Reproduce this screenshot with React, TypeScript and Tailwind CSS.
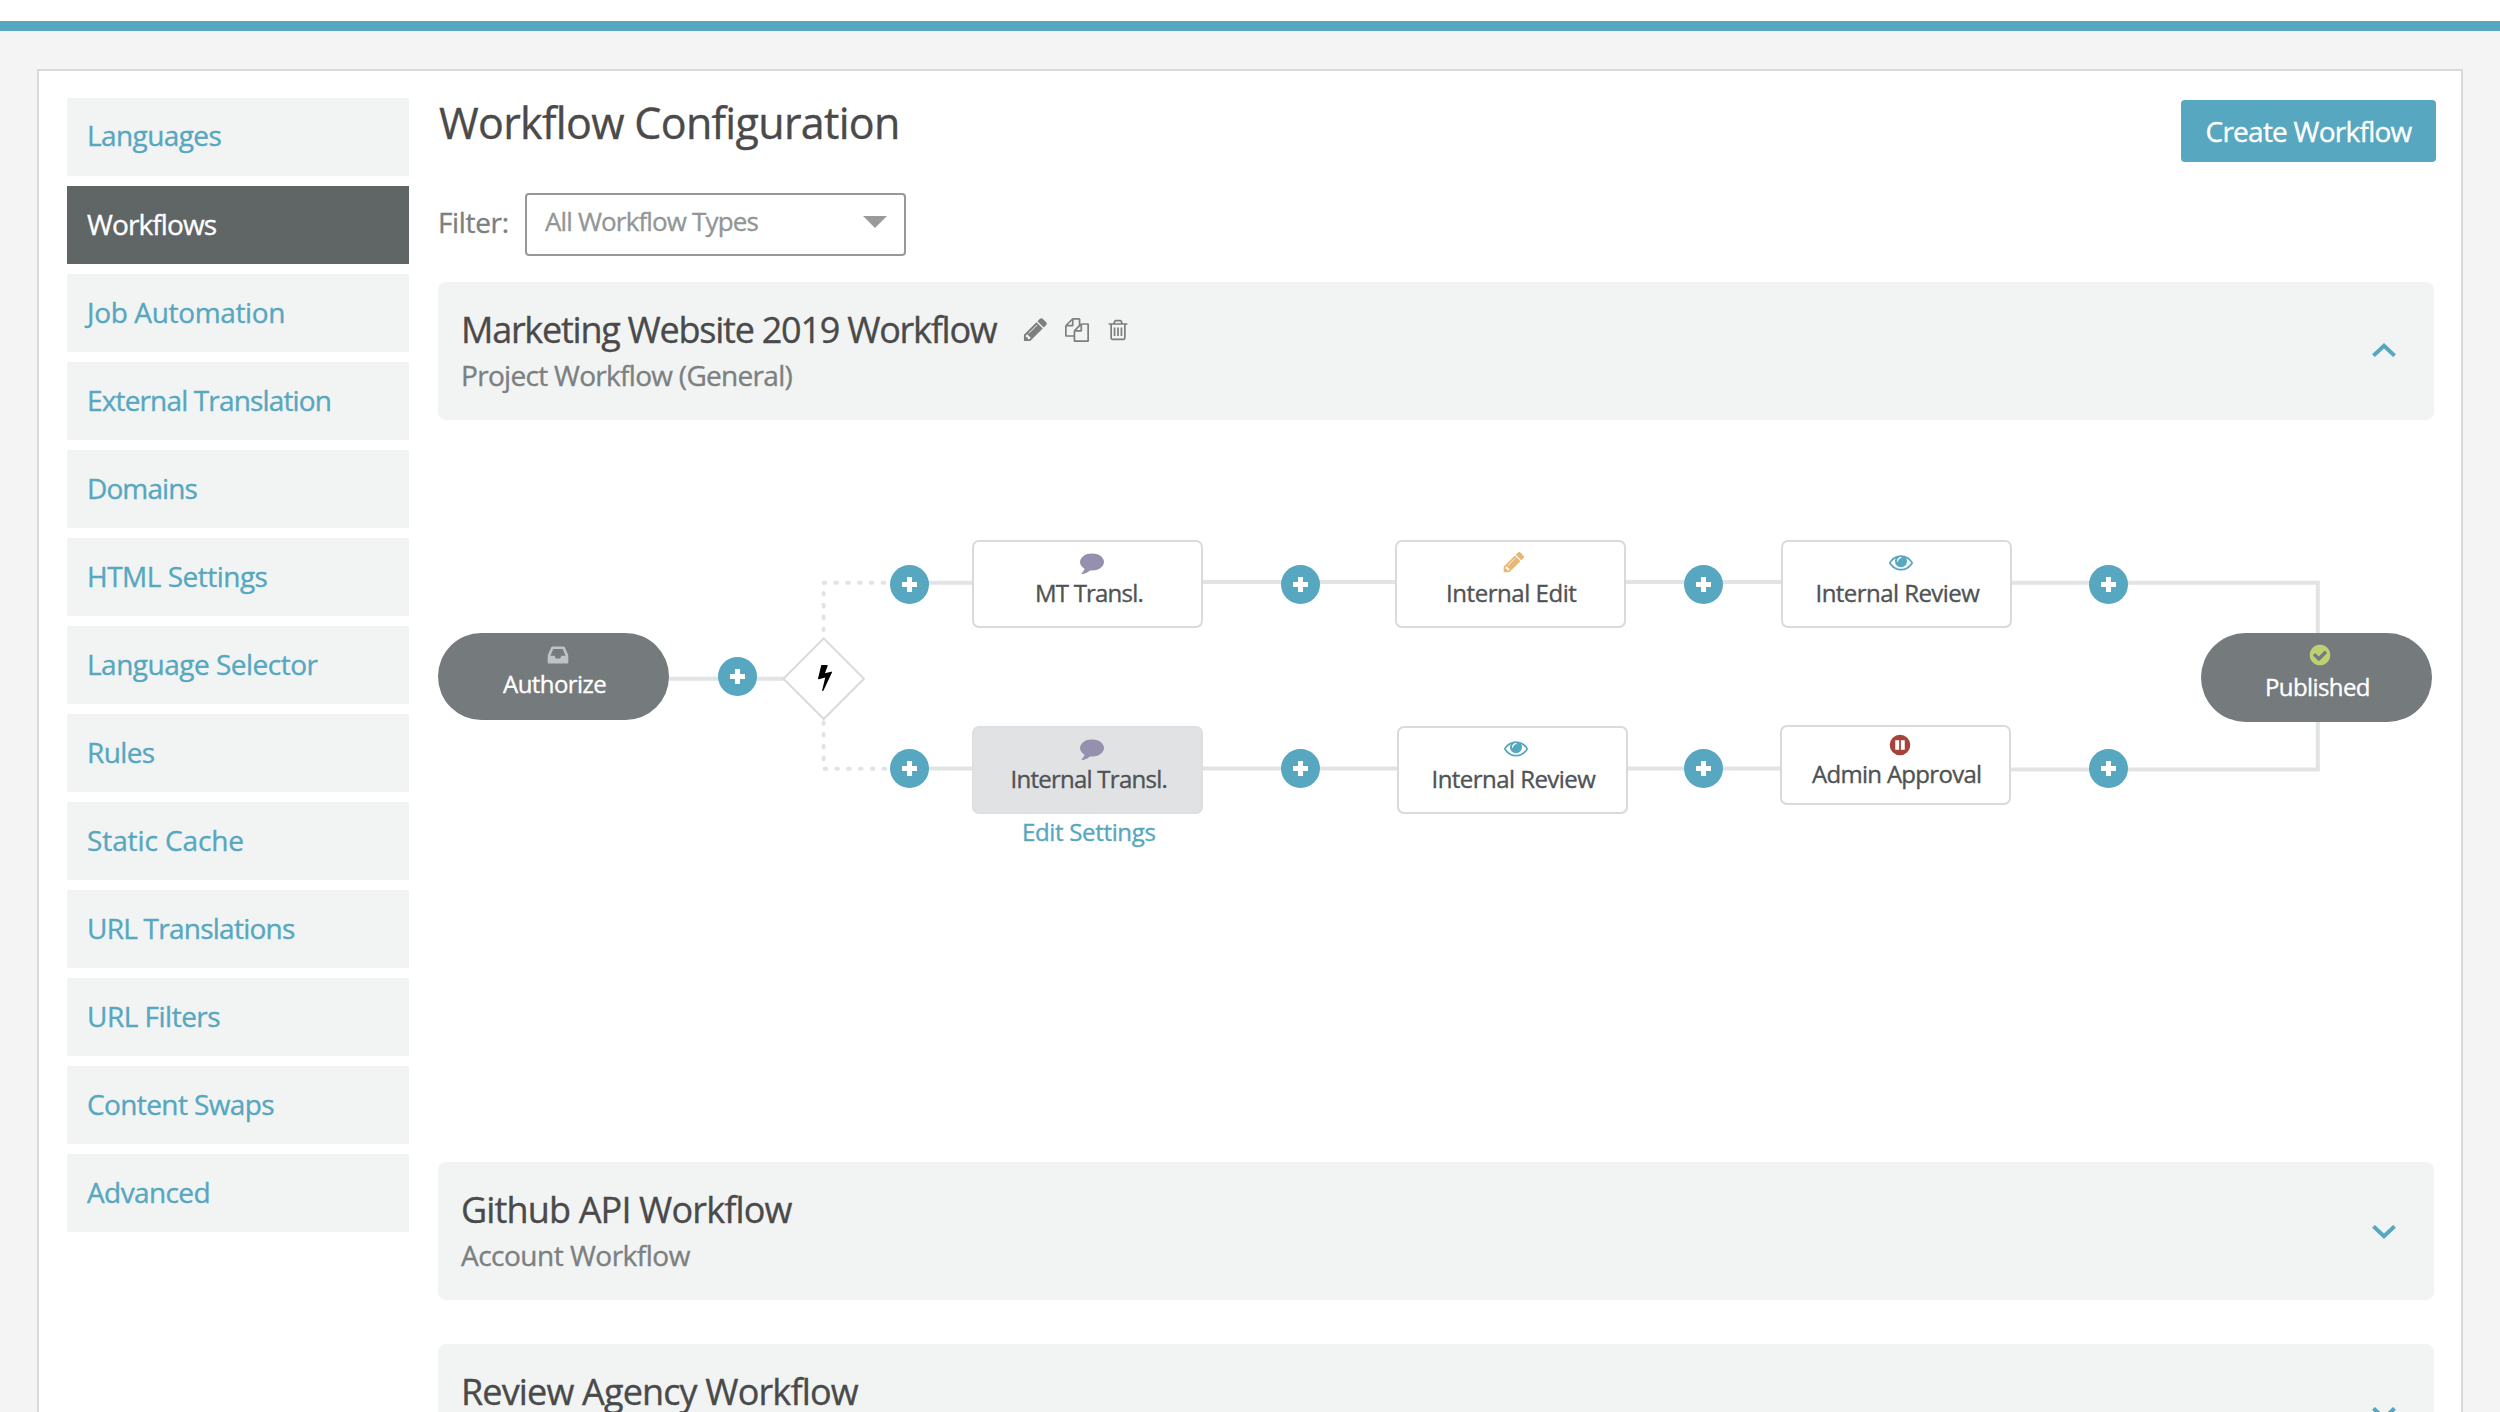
import React from "react";

const P = {
  pencil:
    "M491 1536l91-91-235-235-91 91v107h128v128h107zm523-928q0-22-22-22-10 0-17 7l-542 542q-7 7-7 17 0 22 22 22 10 0 17-7l542-542q7-7 7-17zm-54-192l416 416-832 832h-416v-416zm683 96q0 53-37 90l-166 166-416-416 166-165q36-38 90-38 53 0 91 38l235 234q37 39 37 91z",
  copy: "M1696 384q40 0 68 28t28 68v1216q0 40-28 68t-68 28h-960q-40 0-68-28t-28-68v-288h-544q-40 0-68-28t-28-68v-672q0-40 20-88t48-76l408-408q28-28 76-48t88-20h416q40 0 68 28t28 68v328q68-40 128-40h416zm-544 213l-299 299h299v-299zm-640-384l-299 299h299v-299zm196 647l316-316v-416h-384v416q0 40-28 68t-68 28h-416v640h512v-256q0-40 20-88t48-76zm956 804v-1152h-384v416q0 40-28 68t-68 28h-416v640h896z",
  trash:
    "M704 736v576q0 14-9 23t-23 9h-64q-14 0-23-9t-9-23v-576q0-14 9-23t23-9h64q14 0 23 9t9 23zm256 0v576q0 14-9 23t-23 9h-64q-14 0-23-9t-9-23v-576q0-14 9-23t23-9h64q14 0 23 9t9 23zm256 0v576q0 14-9 23t-23 9h-64q-14 0-23-9t-9-23v-576q0-14 9-23t23-9h64q14 0 23 9t9 23zm128 724v-948h-896v948q0 22 7 40.5t14.5 27 10.5 8.5h832q3 0 10.5-8.5t14.5-27 7-40.5zm-672-1076h448l-48-117q-7-9-17-11h-317q-10 2-17 11zm928 32v64q0 14-9 23t-23 9h-96v948q0 83-47 143.5t-113 60.5h-832q-66 0-113-58.5t-47-141.5v-952h-96q-14 0-23-9t-9-23v-64q0-14 9-23t23-9h309l70-167q15-37 54-63t79-26h320q40 0 79 26t54 63l70 167h309q14 0 23 9t9 23z",
  comment:
    "M1792 896q0 174-120 321.5t-326 233-450 85.5q-70 0-145-8-198 175-460 242-49 14-114 22-17 2-30.5-9t-17.5-29v-1q-3-4-.5-12t2-10 4.5-9.5l6-9 7-8.5 8-9q7-8 31-34.5t34.5-38 31-39.5 32.5-51 27-59 26-76q-157-89-247.5-220t-90.5-281q0-130 71-248.5t191-204.5 286-136.5 348-50.5q244 0 450 85.5t326 233 120 321.5z",
  eye: "M1664 960q-152-236-381-353 61 104 61 225 0 185-131.5 316.5t-316.5 131.5-316.5-131.5-131.5-316.5q0-121 61-225-229 117-381 353 133 205 333.5 326.5t434.5 121.5 434.5-121.5 333.5-326.5zm-720-384q0-20-14-34t-34-14q-125 0-214.5 89.5t-89.5 214.5q0 20 14 34t34 14 34-14 14-34q0-86 61-147t147-61q20 0 34-14t14-34zm848 384q0 34-20 69-140 230-376.5 368.5t-499.5 138.5-499.5-139-376.5-368q-20-35-20-69t20-69q140-229 376.5-368t499.5-139 499.5 139 376.5 368q20 35 20 69z",
  bolt: "M1333 566q18 20 7 44l-540 1157q-13 25-42 25-4 0-14-2-17-5-25.5-19t-4.5-30l197-808-406 101q-4 1-12 1-18 0-31-11-18-15-13-39l201-825q4-14 16-23t28-9h328q19 0 32 12.5t13 29.5q0 8-5 18l-171 463 396-98q8-2 12-2 19 0 34 15z",
  check:
    "M1412 734q0-28-18-46l-91-90q-19-19-45-19t-45 19l-408 407-226-226q-19-19-45-19t-45 19l-91 90q-18 18-18 46 0 27 18 45l362 362q19 19 45 19 27 0 46-19l543-543q18-18 18-45zm252 162q0 209-103 385.5t-279.5 279.5-385.5 103-385.5-103-279.5-279.5-103-385.5 103-385.5 279.5-279.5 385.5-103 385.5 103 279.5 279.5 103 385.5z",
  inbox:
    "M1151 960h316q-1-3-2.5-8t-2.5-8l-212-496h-708l-212 496q-1 2-2.5 8t-2.5 8h316l95 192h320zm513 30v482q0 26-19 45t-45 19h-1408q-26 0-45-19t-19-45v-482q0-62 25-123l238-552q10-25 36.5-42t52.5-17h832q26 0 52.5 17t36.5 42l238 552q25 61 25 123z",
  pause:
    "M896 128a768 768 0 1 0 0 1536a768 768 0 1 0 0-1536zM540 540h290v712h-290zM962 540h290v712h-290z",
};

function Icon({ name, className }: { name: keyof typeof P; className: string }) {
  return (
    <svg viewBox="0 0 1792 1792" fill="currentColor" fillRule={name === "pause" ? "evenodd" : "nonzero"} className={`shrink-0 overflow-visible ${className}`}>
      <path d={P[name]} />
    </svg>
  );
}

const NAV = [
  { label: "Languages", cls: "tracking-[-0.6px] bg-[#f2f4f4] text-[#56a7bf] pb-[5px]" },
  { label: "Workflows", cls: "tracking-[-0.9px] bg-[#606666] text-white pb-[2px]" },
  { label: "Job Automation", cls: "tracking-[-0.35px] bg-[#f2f4f4] text-[#56a7bf] pb-[2px]" },
  { label: "External Translation", cls: "tracking-[-0.85px] bg-[#f2f4f4] text-[#56a7bf] pb-[2px]" },
  { label: "Domains", cls: "tracking-[-0.9px] bg-[#f2f4f4] text-[#56a7bf] pb-[2px]" },
  { label: "HTML Settings", cls: "tracking-[-0.5px] bg-[#f2f4f4] text-[#56a7bf] pb-[2px]" },
  { label: "Language Selector", cls: "tracking-[-0.5px] bg-[#f2f4f4] text-[#56a7bf] pb-[2px]" },
  { label: "Rules", cls: "tracking-[-0.6px] bg-[#f2f4f4] text-[#56a7bf] pb-[2px]" },
  { label: "Static Cache", cls: "tracking-[-0.1px] bg-[#f2f4f4] text-[#56a7bf] pb-[2px]" },
  { label: "URL Translations", cls: "tracking-[-0.75px] bg-[#f2f4f4] text-[#56a7bf] pb-[2px]" },
  { label: "URL Filters", cls: "tracking-[-0.5px] bg-[#f2f4f4] text-[#56a7bf] pb-[2px]" },
  { label: "Content Swaps", cls: "tracking-[-0.6px] bg-[#f2f4f4] text-[#56a7bf] pb-[2px]" },
  { label: "Advanced", cls: "tracking-[-0.6px] bg-[#f2f4f4] text-[#56a7bf] pb-[2px]" },
];

function Chevron({ up = false }: { up?: boolean }) {
  return (
    <svg viewBox="0 0 24 14" className={up ? "mt-[61px] h-[14px] w-6" : "mt-[63px] h-[14px] w-6"} fill="none" stroke="#56a7bf" strokeWidth="4">
      <path d={up ? "M1.5 12.6L12 2.8L22.5 12.6" : "M1.5 1.4L12 11.2L22.5 1.4"} />
    </svg>
  );
}

function Card(props: { title: string; sub?: string; titleCls: string; subCls?: string; up?: boolean; children?: React.ReactNode }) {
  return (
    <section className="flex h-[138px] w-[1996px] shrink-0 justify-between rounded-lg bg-[#f2f4f4] pr-[38px] pl-[23px]">
      <div className="pt-[30px]">
        <div className="flex h-9 items-center">
          <h2 className={`text-[36px] leading-9 text-[#4a4a4a] ${props.titleCls}`}>{props.title}</h2>
          {props.children}
        </div>
        {props.sub && <p className={`mt-[13px] text-[28px] leading-7 text-[#7b8081] ${props.subCls ?? ""}`}>{props.sub}</p>}
      </div>
      <Chevron up={props.up} />
    </section>
  );
}

/* Node positions are relative to the canvas origin. */
const NODES: { label: string; icon: keyof typeof P; box: string; iconCls: string; text: string }[] = [
  { label: "Authorize", icon: "inbox", box: "left-0 top-[213px] h-[87px] w-[231px] rounded-full bg-[#757a7c] text-white", iconCls: "left-[108px] top-[10px] text-[#bfc3c4]", text: "left-[65px] top-[39px] tracking-[-0.55px]" },
  { label: "MT Transl.", icon: "comment", box: "left-[534px] top-[120px] h-[88px] w-[231px] rounded-[7px] border-2 border-[#d9dadb] bg-white text-[#4f5354]", iconCls: "left-[105.5px] top-[8px] text-[#9590ae]", text: "left-[61px] top-[39px] tracking-[-0.8px]" },
  { label: "Internal Edit", icon: "pencil", box: "left-[957px] top-[120px] h-[88px] w-[231px] rounded-[7px] border-2 border-[#d9dadb] bg-white text-[#4f5354]", iconCls: "left-[105px] top-[8px] text-[#e6b873]", text: "left-[49px] top-[39px] tracking-[-0.45px]" },
  { label: "Internal Review", icon: "eye", box: "left-[1343px] top-[120px] h-[88px] w-[231px] rounded-[7px] border-2 border-[#d9dadb] bg-white text-[#4f5354]", iconCls: "left-[105.5px] top-[8px] text-[#56a7bf]", text: "left-[32.5px] top-[39px] tracking-[-0.55px]" },
  { label: "Internal Transl.", icon: "comment", box: "left-[534px] top-[306px] h-[88px] w-[231px] rounded-[7px] border-2 border-[#dedfe1] bg-[#e1e2e4] text-[#4f5354]", iconCls: "left-[105.5px] top-[8px] text-[#9590ae]", text: "left-[36.5px] top-[39px] tracking-[-0.75px]" },
  { label: "Internal Review", icon: "eye", box: "left-[959px] top-[306px] h-[88px] w-[231px] rounded-[7px] border-2 border-[#d9dadb] bg-white text-[#4f5354]", iconCls: "left-[105px] top-[8px] text-[#56a7bf]", text: "left-[32.5px] top-[39px] tracking-[-0.55px]" },
  { label: "Admin Approval", icon: "pause", box: "left-[1342px] top-[305px] h-[80px] w-[231px] rounded-[7px] border-2 border-[#d9dadb] bg-white text-[#4f5354]", iconCls: "left-[106px] top-[6px] text-[#a5443b]", text: "left-[30px] top-[35px] tracking-[-0.7px]" },
  { label: "Published", icon: "check", box: "left-[1763px] top-[213px] h-[89px] w-[231px] rounded-full bg-[#757a7c] text-white", iconCls: "left-[107px] top-[10px] text-[#bed073]", text: "left-[64px] top-[42px] tracking-[-0.6px]" },
];

const PLUSES = [
  "left-[280px] top-[237px]",
  "left-[452px] top-[145px]",
  "left-[452px] top-[329px]",
  "left-[843px] top-[145px]",
  "left-[843px] top-[329px]",
  "left-[1246px] top-[145px]",
  "left-[1246px] top-[329px]",
  "left-[1651px] top-[145px]",
  "left-[1651px] top-[329px]",
];

function Canvas() {
  return (
    <div className="relative h-[742px] w-[1996px] shrink-0">
      <svg className="absolute inset-0 h-full w-full" viewBox="438 420 1996 742" fill="none" stroke="#e1e3e4" strokeWidth="4">
        <path d="M668 678.7H784M909 582.8H974M909 768.5H974M1202 582H1396M1202 768.5H1398M1624 582H1783M1626 768.5H1781" />
        <path d="M2010 582.8H2317.8V640M2009 769.4H2317.8V715" />
        <g strokeLinecap="round" strokeDasharray="1.6 10.2">
          <path d="M823.6 593V636M823.6 722.2V762" />
          <path d="M823.6 582.7H890M824.6 768.7H890" />
        </g>
        <path d="M823.7 638.4L864 678.7L823.7 719L783.4 678.7Z" fill="#fff" stroke="#d9dadb" strokeWidth="2" />
      </svg>
      <Icon name="bolt" className="absolute top-[243px] left-[372.5px] h-7 w-7 text-black" />
      {NODES.map((n, i) => (
        <div key={i} className={`absolute ${n.box}`}>
          <Icon name={n.icon} className={`absolute h-6 w-6 ${n.iconCls}`} />
          <span className={`absolute text-[24px] leading-6 whitespace-nowrap ${n.text}`}>{n.label}</span>
        </div>
      ))}
      {PLUSES.map((c) => (
        <button key={c} className={`absolute flex h-[39px] w-[39px] items-center justify-center rounded-full bg-[#56a7bf] ${c}`}>
          <svg viewBox="0 0 16 16" className="h-[15px] w-[15px]" fill="#fff">
            <path d="M5.3 0h5.4v5.3H16v5.4h-5.3V16H5.3v-5.3H0V5.3h5.3z" />
          </svg>
        </button>
      ))}
      <a className="absolute top-[400px] left-[584px] text-[24px] leading-6 tracking-[-0.33px] whitespace-nowrap text-[#56a7bf]">Edit Settings</a>
    </div>
  );
}

export default function App() {
  return (
    <div className="flex h-[1412px] w-[2500px] flex-col overflow-hidden bg-[#f4f4f4] font-['Open_Sans',sans-serif] [-webkit-text-stroke:0.35px_currentColor]">
      <div className="h-[31px] shrink-0 border-b-[10px] border-[#56a7bf] bg-white" />
      <div className="mt-[38px] ml-[37px] flex w-[2426px] grow gap-[29px] overflow-hidden border-2 border-b-0 border-[#d8d9d9] bg-white pt-[27px] pl-7">
        <nav className="flex w-[342px] shrink-0 flex-col gap-[10px]">
          {NAV.map((n) => (
            <a key={n.label} className={`flex h-[78px] shrink-0 items-center pl-5 text-[28px] leading-7 whitespace-nowrap ${n.cls}`}>
              {n.label}
            </a>
          ))}
        </nav>
        <main className="flex w-[1998px] flex-col">
          <header className="flex h-[95px] shrink-0 items-start justify-between pt-[2px]">
            <h1 className="mt-[1px] ml-[1px] text-[43px] leading-[43px] tracking-[-0.68px] text-[#4a4a4a]">Workflow Configuration</h1>
            <button className="flex h-[62px] w-[255px] items-center justify-center rounded bg-[#56a7bf] pb-[1px] text-[28px] leading-7 tracking-[-0.75px] text-white">
              Create Workflow
            </button>
          </header>
          <div className="mb-[26px] flex h-[63px] shrink-0">
            <label className="w-[87px] pt-[15px] text-[28px] leading-7 tracking-[-0.35px] text-[#7b8081]">Filter:</label>
            <div className="flex h-[63px] w-[381px] items-center justify-between rounded border-2 border-[#969999] pr-[17px] pb-[7px] pl-[18px] text-[26px] leading-7 tracking-[-0.85px] text-[#929696]">
              <span>All Workflow Types</span>
              <svg viewBox="0 0 24 12" className="mt-[2px] h-3 w-6" fill="#999b9b">
                <path d="M0 0h24L12 12z" />
              </svg>
            </div>
          </div>
          <Card up title="Marketing Website 2019 Workflow" sub="Project Workflow (General)" titleCls="tracking-[-1.25px]" subCls="tracking-[-0.7px]">
            <div className="ml-[26px] flex items-center text-[#7c7f7f]">
              <Icon name="pencil" className="mr-[16px] -mt-[1px] h-[27px] w-[27px]" />
              <Icon name="copy" className="mr-[17px] h-6 w-6" />
              <Icon name="trash" className="h-6 w-6" />
            </div>
          </Card>
          <Canvas />
          <div className="flex flex-col gap-11">
            <Card title="Github API Workflow" sub="Account Workflow" titleCls="tracking-[-0.85px]" subCls="tracking-[-0.5px]" />
            <Card title="Review Agency Workflow" titleCls="tracking-[-0.85px]" />
          </div>
        </main>
      </div>
    </div>
  );
}
